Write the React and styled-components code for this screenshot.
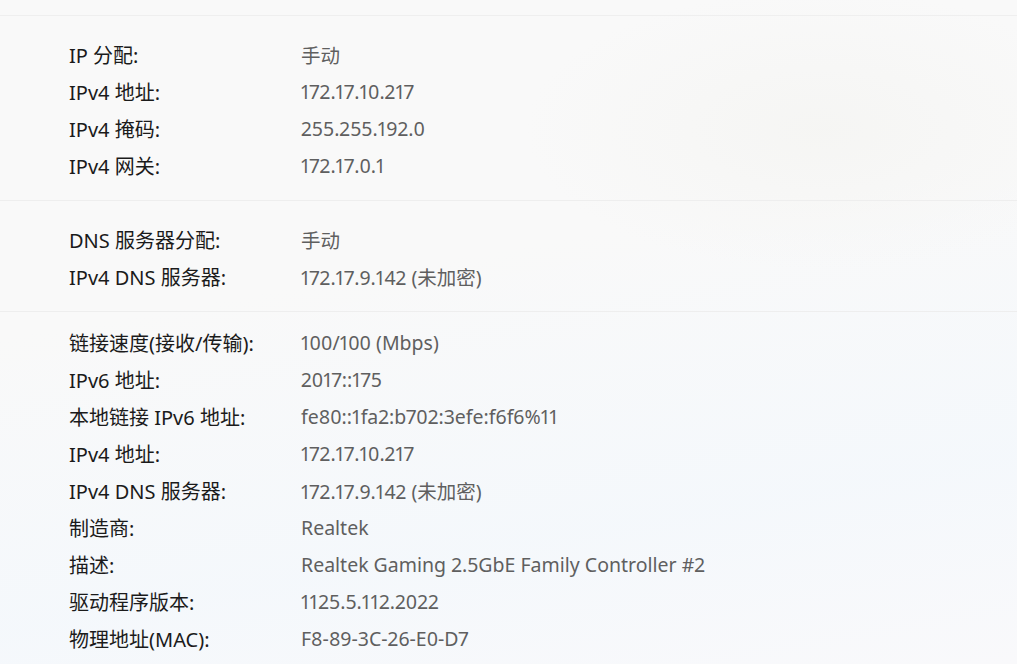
import styled, { createGlobalStyle } from "styled-components"

const GlobalStyle = createGlobalStyle`
    html, body {
        margin: 0;
        padding: 0;
    }
    body {
        font-family: "Noto Sans", "Noto Sans CJK SC", sans-serif;
        background: #f9f9f9;
    }
`

const sections = [
    {
        top: 20,
        rows: [
            ["IP 分配:", "手动"],
            ["IPv4 地址:", "172.17.10.217"],
            ["IPv4 掩码:", "255.255.192.0"],
            ["IPv4 网关:", "172.17.0.1"],
        ],
    },
    {
        top: 20,
        rows: [
            ["DNS 服务器分配:", "手动"],
            ["IPv4 DNS 服务器:", "172.17.9.142 (未加密)"],
        ],
    },
    {
        top: 12,
        rows: [
            ["链接速度(接收/传输):", "100/100 (Mbps)"],
            ["IPv6 地址:", "2017::175"],
            ["本地链接 IPv6 地址:", "fe80::1fa2:b702:3efe:f6f6%11"],
            ["IPv4 地址:", "172.17.10.217"],
            ["IPv4 DNS 服务器:", "172.17.9.142 (未加密)"],
            ["制造商:", "Realtek"],
            ["描述:", "Realtek Gaming 2.5GbE Family Controller #2"],
            ["驱动程序版本:", "1125.5.112.2022"],
            ["物理地址(MAC):", "F8-89-3C-26-E0-D7"],
        ],
    },
]

export default function App() {
    return (
        <>
            <GlobalStyle />
            <Page>
                <TopStrip />
                {sections.map((s, i) => (
                    <Section key={i} $top={s.top} $last={i === sections.length - 1}>
                        {s.rows.map(([label, value]) => (
                            <Row key={label + value}>
                                <Label>{label}</Label>
                                <Value>{value}</Value>
                            </Row>
                        ))}
                    </Section>
                ))}
            </Page>
        </>
    )
}

const Page = styled.div`
    width: 1017px;
    height: 664px;
    overflow: hidden;
    background:
        radial-gradient(ellipse 420px 200px at 820px 130px, rgba(245, 245, 243, 0.9), rgba(249, 249, 249, 0) 70%),
        linear-gradient(170deg, rgba(249, 249, 249, 0) 40%, rgba(244, 248, 252, 0.9) 75%, rgba(249, 249, 251, 1) 100%),
        #f9f9f9;
`

const TopStrip = styled.div`
    height: 15px;
    border-bottom: 1px solid #efefef;
`

const Section = styled.div`
    padding: ${props => props.$top}px 0 ${props => props.$last ? 0 : 16}px 69px;
    border-bottom: ${props => props.$last ? "none" : "1px solid #eeeeee"};
`

const Row = styled.div`
    display: grid;
    grid-template-columns: 232px 1fr;
    height: 37px;
    align-items: center;
    font-variant-numeric: proportional-nums;
`

const Label = styled.div`
    font-size: 20px;
    color: #1b1b1b;
    white-space: nowrap;
`

const Value = styled.div`
    font-size: 19.5px;
    color: #5f5f5f;
    white-space: nowrap;
`
